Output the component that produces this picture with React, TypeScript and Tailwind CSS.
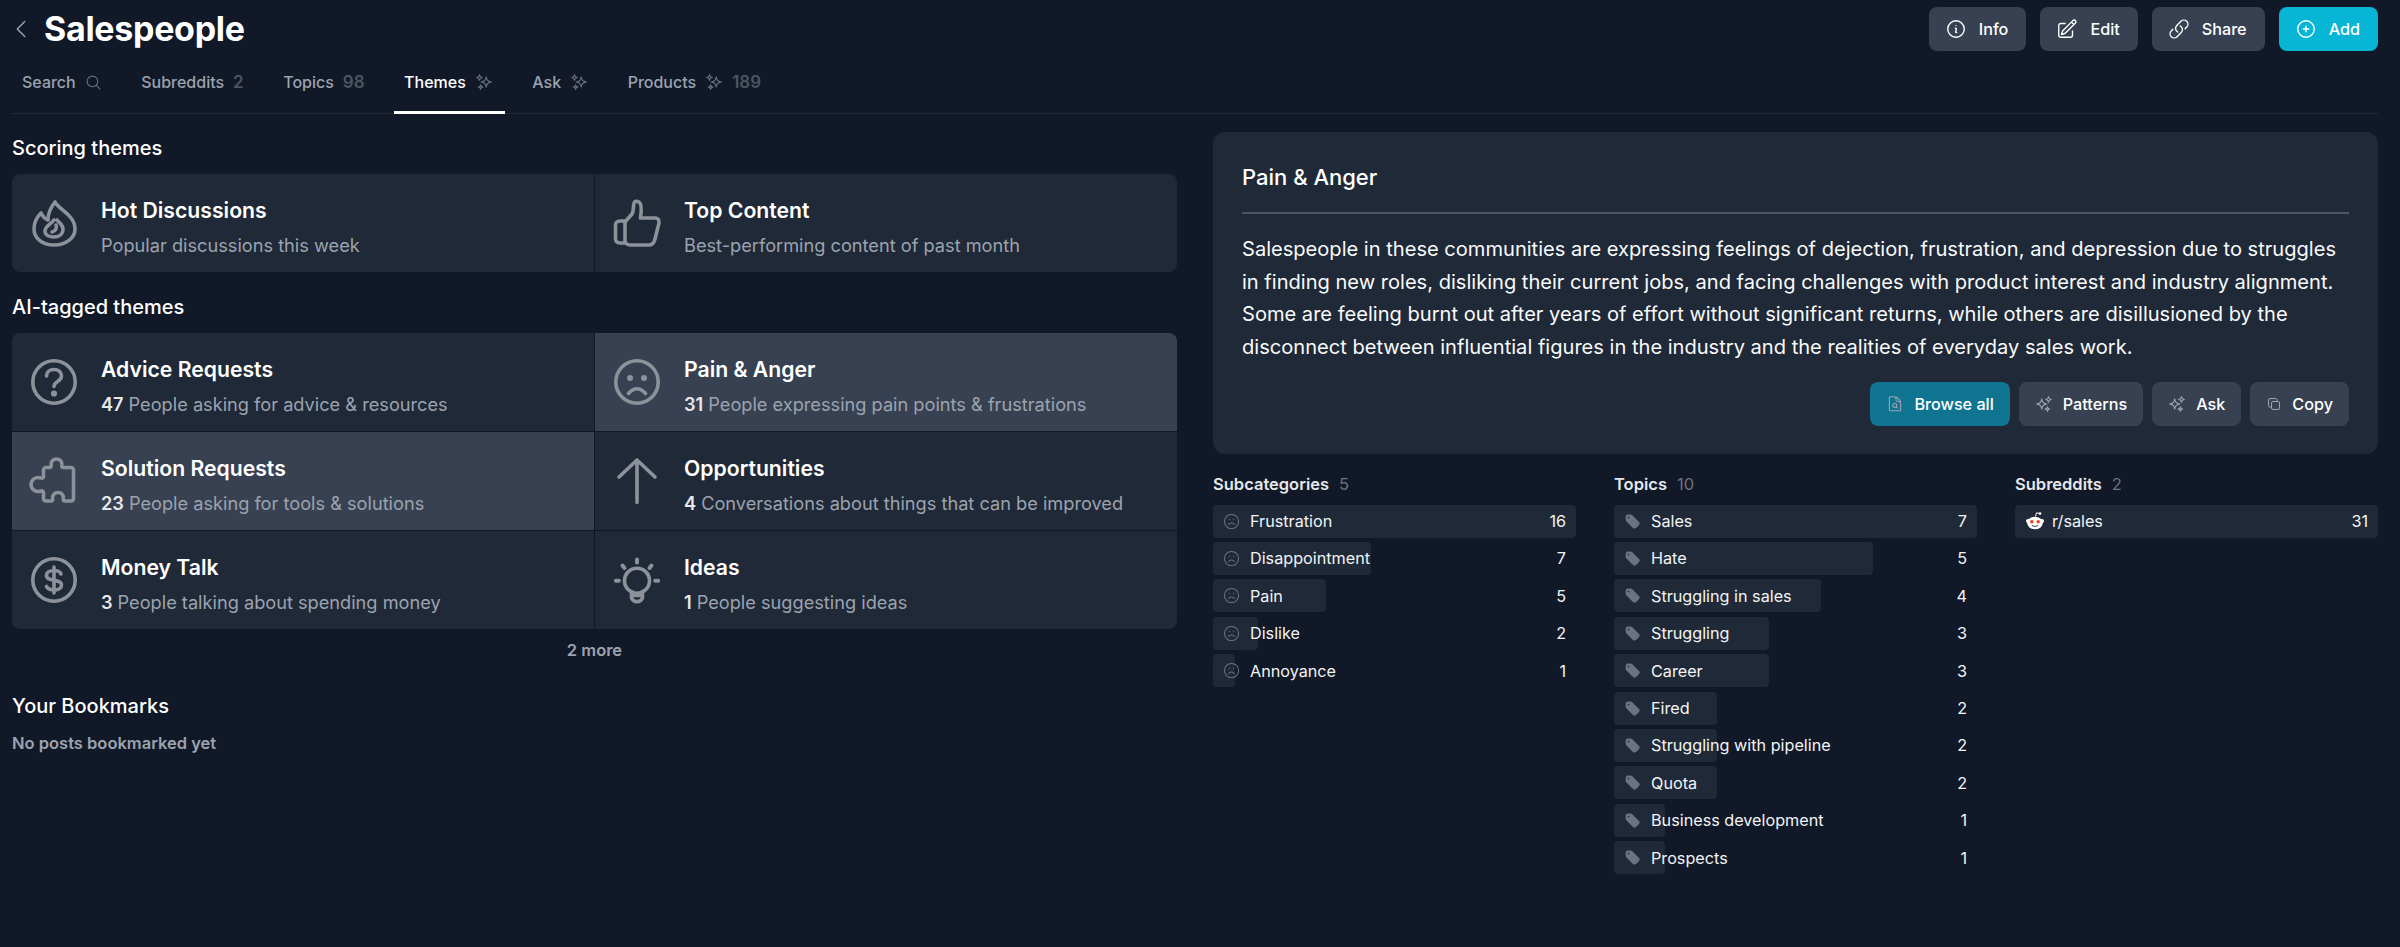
import type { ReactNode } from 'react'
import {
  HiOutlineChevronLeft,
  HiOutlineDocumentMagnifyingGlass,
  HiOutlineInformationCircle,
  HiOutlineLink,
  HiOutlineMagnifyingGlass,
  HiOutlinePencilSquare,
  HiOutlinePlusCircle,
  HiOutlineSparkles,
  HiOutlineSquare2Stack,
  HiTag,
} from 'react-icons/hi2'
import { Frown } from 'lucide-react'

/** Big theme icons, drawn on a 46px box */
function ThemeIcon({ children }: { children: ReactNode }) {
  return (
    <svg
      viewBox="0 0 46 46"
      fill="none"
      stroke="currentColor"
      strokeWidth="3.6"
      strokeLinecap="round"
      strokeLinejoin="round"
      className="h-[46px] w-[46px] shrink-0 overflow-visible text-[#8d9199]"
    >
      {children}
    </svg>
  )
}

const FireIcon = (
  <ThemeIcon>
    <path d="M24 2C27 9 44 15 44 29C44 38 35 45 23 45C11 45 3 38 3 29C3 22 6 17 10 13C12 17 14 19 17 20C17 13 20 7 24 2Z" />
    <path d="M23 20C20 24 14 26 14 31C14 35 18 37 23 37C28 37 32 34 32 29C32 24 27 22 26 20" />
    <path d="M25 25c1 3 0 6-4 7" />
  </ThemeIcon>
)
const ThumbIcon = (
  <ThemeIcon>
    <path d="M11 22L18 14C20 11 19 6 20 3C20.5 1 23 1 25 2C28 4 27.5 11 26.5 18H41C44 18 45.5 20 45 23L41 39C40 43 38 45 35 45H16C13 45 11 43 11 41Z" />
    <path d="M11 21H6C3 21 1.5 23 1.5 25V38C1.5 41 3 43 6 43H12" />
  </ThemeIcon>
)
const QuestionIcon = (
  <ThemeIcon>
    <circle cx="23" cy="23" r="21.2" />
    <path d="M15.5 17c0-4 3.5-6.5 7.5-6.5s7.5 2.500 7.500 6.200c0 3-2 4.500-4 5.800-2 1.300-3.500 2.500-3.500 5" />
    <circle cx="23" cy="34.500" r="1.300" fill="currentColor" />
  </ThemeIcon>
)
const SadIcon = (
  <ThemeIcon>
    <circle cx="23" cy="23" r="21.2" />
    <circle cx="16" cy="19" r="1.200" fill="currentColor" />
    <circle cx="30" cy="19" r="1.200" fill="currentColor" />
    <path d="M14.500 34.500Q23 25 31.500 34.500" />
  </ThemeIcon>
)
const PuzzleIcon = (
  <ThemeIcon>
    <path
      transform="translate(-3 0)"
      d="M18 9.500h3.500c1.500 0 2-1 1.700-2.500-.6-3.500 2-6 5.300-6s5.900 2.500 5.300 6c-.3 1.500.2 2.500 1.700 2.500h7.500a2.500 2.500 0 0 1 2.500 2.500v28.500a2.500 2.500 0 0 1-2.500 2.500h-6c-1.500 0-2-1-1.700-2.500.6-3.500-2-6-5.300-6s-5.900 2.500-5.300 6c.3 1.500-.2 2.500-1.700 2.500h-5a2.500 2.500 0 0 1-2.500-2.500v-6c0-1.200-1-1.800-2.300-1.500-1 .3-2 .5-3.200.5-3.800 0-7-3-7-7s3.200-7 7-7c1.200 0 2.200.2 3.200.5 1.300.3 2.300-.3 2.300-1.500v-6.500a2.500 2.500 0 0 1 2.500-2.500z"
    />
  </ThemeIcon>
)
const ArrowIcon = (
  <ThemeIcon>
    <path d="M23 2v42.500M5 19L23 2l18 17" />
  </ThemeIcon>
)
const DollarIcon = (
  <ThemeIcon>
    <circle cx="23" cy="23" r="21.2" />
    <path d="M30 17c-1-2.500-4-3.500-7-3.500-4 0-7.500 1.700-7.500 5 0 6.500 15 3 15 9.500 0 3.300-3.500 5-7.500 5-3.500 0-6-1-7.500-3.500M23 10v26" />
  </ThemeIcon>
)
const BulbIcon = (
  <ThemeIcon>
    <circle cx="23" cy="23.700" r="12.500" />
    <path d="M17.500 34.500V41a6 6 0 0 0 11 0V34.500M18 38.500h10" />
    <path d="M23 2.500v3M8.500 8.500l2 2.500M37.500 8.500l-2 2.500M1.800 23.700h3M41.200 23.700h3" strokeWidth="4" />
  </ThemeIcon>
)

const RedditIcon = (
  <svg viewBox="0 0 20 20" className="h-5 w-5 shrink-0">
    <path d="M10.500 5.500L11.500 1.800l3 .7" fill="none" stroke="#fff" strokeWidth="1" />
    <circle cx="15" cy="2.600" r="1.300" fill="#fff" />
    <circle cx="3" cy="10" r="2" fill="#fff" />
    <circle cx="17" cy="10" r="2" fill="#fff" />
    <ellipse cx="10" cy="12" rx="7.800" ry="6.300" fill="#fff" />
    <circle cx="6.800" cy="10.800" r="1.700" fill="#ff3b10" />
    <circle cx="13.200" cy="10.800" r="1.700" fill="#ff3b10" />
    <path d="M6.800 14.500Q10 16.500 13.200 14.500" fill="none" stroke="#111827" strokeWidth=".8" />
  </svg>
)

const sparkle = <HiOutlineSparkles className="h-[18px] w-[18px] -scale-x-100 text-[#6b7280]" />

function Tab({ label, count, icon, active }: { label: string; count?: number; icon?: ReactNode; active?: boolean }) {
  return (
    <div
      className={`-mb-px flex items-center gap-[9px] border-b-[3px] pl-[10px] pr-[12px] pt-[13px] pb-[18px] text-[16px] leading-[22px] font-medium ${
        active ? 'border-white text-white' : 'border-transparent text-[#9ca3af]'
      }`}
    >
      <span>{label}</span>
      {icon}
      {count != null && <span className="text-[17px] font-semibold text-[#4b5563]">{count}</span>}
    </div>
  )
}

function TopButton({ icon, label, primary }: { icon: ReactNode; label: string; primary?: boolean }) {
  return (
    <button
      type="button"
      className={`flex h-11 items-center gap-3 rounded-lg pl-[16px] pr-[18px] text-[16.200px] font-medium text-white ${
        primary ? 'bg-[#06b6d4]' : 'bg-[#374151]'
      }`}
    >
      {icon}
      {label}
    </button>
  )
}

function PanelButton({ icon, label, primary }: { icon: ReactNode; label: string; primary?: boolean }) {
  return (
    <button
      type="button"
      className={`flex h-11 items-center gap-[10px] rounded-lg px-4 text-[16.200px] font-medium text-white ${
        primary ? 'bg-[#0e7490]' : 'bg-[#374151]'
      }`}
    >
      {icon}
      {label}
    </button>
  )
}

interface ThemeCellProps {
  icon: ReactNode
  title: string
  count?: number
  text: string
  selected?: boolean
}

function ThemeCell({ icon, title, count, text, selected }: ThemeCellProps) {
  return (
    <div className={`flex h-[98px] items-center gap-6 pl-[19px] ${selected ? 'bg-[#374151]' : 'bg-[#1f2937]'}`}>
      {icon}
      <div className="min-w-0 pt-2">
        <p className="text-[21.200px] leading-7 font-semibold text-white">{title}</p>
        <p className="mt-[7px] text-[18.200px] leading-7 text-[#9ca3af]">
          {count != null && <span className="mr-[5px] font-semibold text-[#e5e7eb]">{count}</span>}
          {text}
        </p>
      </div>
    </div>
  )
}

interface BarRow {
  label: string
  count: number
  width: number
}

function BarList({ title, count, icon, rows }: { title: string; count: number; icon: ReactNode; rows: BarRow[] }) {
  return (
    <div>
      <div className="flex items-center gap-[10px] text-[16.500px] leading-5 font-semibold text-[#e5e7eb]">
        {title}
        <span className="font-normal text-[#6b7280]">{count}</span>
      </div>
      <div className="mt-[11px] flex flex-col gap-[4.400px]">
        {rows.map((row) => (
          <div key={row.label} className="relative flex h-[33px] items-center px-[10px]">
            <div className="absolute inset-y-0 left-0 rounded-sm bg-[#1f2937]" style={{ width: row.width }} />
            <span className="relative flex w-[27px] shrink-0 items-center">{icon}</span>
            <span className="relative flex-1 text-[16.200px] text-[#f3f4f6]">{row.label}</span>
            <span className="relative text-[16.200px] text-[#f3f4f6]">{row.count}</span>
          </div>
        ))}
      </div>
    </div>
  )
}

const subcategories: BarRow[] = [
  { label: 'Frustration', count: 16, width: 363 },
  { label: 'Disappointment', count: 7, width: 158 },
  { label: 'Pain', count: 5, width: 113 },
  { label: 'Dislike', count: 2, width: 45 },
  { label: 'Annoyance', count: 1, width: 22 },
]

const topics: BarRow[] = [
  { label: 'Sales', count: 7, width: 363 },
  { label: 'Hate', count: 5, width: 259 },
  { label: 'Struggling in sales', count: 4, width: 207 },
  { label: 'Struggling', count: 3, width: 155 },
  { label: 'Career', count: 3, width: 155 },
  { label: 'Fired', count: 2, width: 103 },
  { label: 'Struggling with pipeline', count: 2, width: 103 },
  { label: 'Quota', count: 2, width: 103 },
  { label: 'Business development', count: 1, width: 51 },
  { label: 'Prospects', count: 1, width: 51 },
]

export default function App() {
  const btnIcon = 'h-[22px] w-[22px]'
  const panelIcon = 'h-[18px] w-[18px] text-[#9ca3af]'

  return (
    <div className="min-h-screen bg-[#111827] pl-3 pr-[22px] font-['Inter',sans-serif] text-white">
      <header className="flex h-[58px] items-start justify-between">
        <div className="flex items-center -ml-[3px] pt-[9px]">
          <HiOutlineChevronLeft className="h-6 w-6 text-[#9ca3af]" />
          <h1 className="ml-[11px] text-[34px] leading-10 font-bold tracking-[-0.3px]">Salespeople</h1>
        </div>
        <div className="flex gap-[14px] pt-[7px]">
          <TopButton icon={<HiOutlineInformationCircle className={btnIcon} />} label="Info" />
          <TopButton icon={<HiOutlinePencilSquare className={btnIcon} />} label="Edit" />
          <TopButton icon={<HiOutlineLink className={btnIcon} />} label="Share" />
          <TopButton icon={<HiOutlinePlusCircle className={btnIcon} />} label="Add" primary />
        </div>
      </header>

      <nav className="flex gap-[17.500px] border-b border-[#1f2937]">
        <Tab label="Search" icon={<HiOutlineMagnifyingGlass className="h-[17px] w-[17px] text-[#6b7280]" />} />
        <Tab label="Subreddits" count={2} />
        <Tab label="Topics" count={98} />
        <Tab label="Themes" icon={sparkle} active />
        <Tab label="Ask" icon={sparkle} />
        <Tab label="Products" icon={sparkle} count={189} />
      </nav>

      <main className="grid grid-cols-2 gap-[36px]">
        <section>
          <h2 className="mt-5 text-[20px] leading-7 font-medium">Scoring themes</h2>
          <div className="mt-3 grid grid-cols-2 gap-px overflow-hidden rounded-lg bg-[#111827]">
            <ThemeCell icon={FireIcon} title="Hot Discussions" text="Popular discussions this week" />
            <ThemeCell icon={ThumbIcon} title="Top Content" text="Best-performing content of past month" />
          </div>

          <h2 className="mt-[21px] text-[20px] leading-7 font-medium">AI-tagged themes</h2>
          <div className="mt-3 grid grid-cols-2 gap-px overflow-hidden rounded-lg bg-[#111827]">
            <ThemeCell icon={QuestionIcon} title="Advice Requests" count={47} text="People asking for advice & resources" />
            <ThemeCell icon={SadIcon} title="Pain & Anger" count={31} text="People expressing pain points & frustrations" selected />
            <ThemeCell icon={PuzzleIcon} title="Solution Requests" count={23} text="People asking for tools & solutions" selected />
            <ThemeCell icon={ArrowIcon} title="Opportunities" count={4} text="Conversations about things that can be improved" />
            <ThemeCell icon={DollarIcon} title="Money Talk" count={3} text="People talking about spending money" />
            <ThemeCell icon={BulbIcon} title="Ideas" count={1} text="People suggesting ideas" />
          </div>
          <p className="mt-[9px] text-center text-[16.500px] leading-6 font-semibold text-[#9ca3af]">2 more</p>

          <h2 className="mt-[30px] text-[20px] leading-7 font-medium">Your Bookmarks</h2>
          <p className="mt-[11px] text-[16.500px] leading-6 font-semibold text-[#9ca3af]">No posts bookmarked yet</p>
        </section>

        <section className="pt-[18px]">
          <div className="rounded-xl bg-[#1f2937] px-[29px] pt-[30px] pb-7">
            <h3 className="text-[22px] leading-[30px] font-medium">Pain &amp; Anger</h3>
            <div className="mt-5 h-[2px] bg-[#4b5563]" />
            <p className="mt-[19px] text-[20.080px] leading-[32.670px] text-[#f9fafb]">
              Salespeople in these communities are expressing feelings of dejection, frustration, and depression due to
              struggles in finding new roles, disliking their current jobs, and facing challenges with product interest
              and industry alignment. Some are feeling burnt out after years of effort without significant returns, while
              others are disillusioned by the disconnect between influential figures in the industry and the realities of
              everyday sales work.
            </p>
            <div className="mt-[18px] flex justify-end gap-[9px]">
              <PanelButton icon={<HiOutlineDocumentMagnifyingGlass className={panelIcon} />} label="Browse all" primary />
              <PanelButton icon={<HiOutlineSparkles className={panelIcon} />} label="Patterns" />
              <PanelButton icon={<HiOutlineSparkles className={panelIcon} />} label="Ask" />
              <PanelButton icon={<HiOutlineSquare2Stack className="h-4 w-4 text-[#9ca3af]" />} label="Copy" />
            </div>
          </div>

          <div className="mt-5 grid grid-cols-3 gap-[38px]">
            <BarList title="Subcategories" count={5} icon={<Frown className="h-[17px] w-[17px] text-[#6b7280]" strokeWidth={1.5} />} rows={subcategories} />
            <BarList title="Topics" count={10} icon={<HiTag className="h-[17px] w-[17px] text-[#6b7280]" />} rows={topics} />
            <BarList title="Subreddits" count={2} icon={RedditIcon} rows={[{ label: 'r/sales', count: 31, width: 363 }]} />
          </div>
        </section>
      </main>
    </div>
  )
}
